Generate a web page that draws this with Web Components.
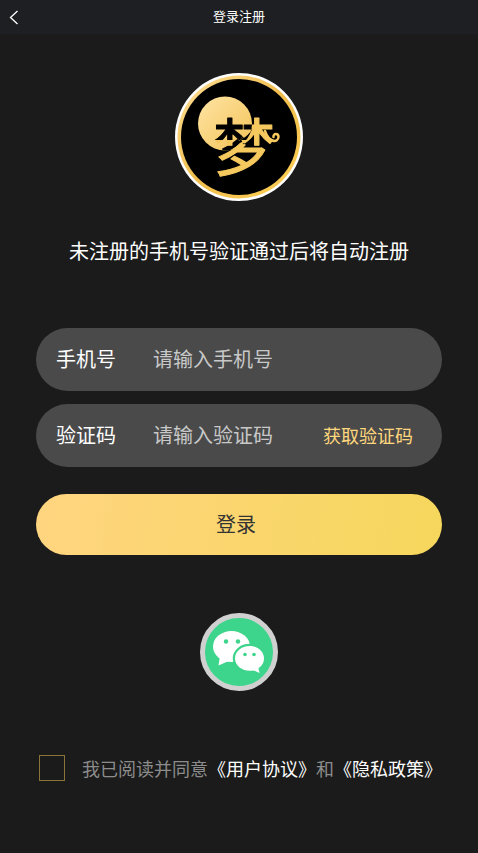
<!DOCTYPE html>
<html lang="zh-CN">
<head>
<meta charset="utf-8">
<meta name="viewport" content="width=device-width, initial-scale=1">
<title>登录注册</title>
<style>
    body {
        margin: 0;
        background: #1b1b1b;
        color: #fff;
        font-family: "Noto Sans CJK SC", sans-serif;
        font-size: 20px;
    }
</style>
</head>
<body>
<login-page></login-page>

<script>
class NavBar extends HTMLElement {
    constructor() {
        super();
        this.attachShadow({ mode: 'open' }).innerHTML = `
            <style>
                :host {
                    display: grid;
                    grid-template-columns: 28px 1fr 28px;
                    align-items: center;
                    height: 34px;
                    background: #1e1f22;
                }

                button {
                    display: flex;
                    justify-content: center;
                    padding: 0;
                    border: 0;
                    background: none;
                    color: #fff;
                    cursor: pointer;
                }

                h1 {
                    margin: 0;
                    padding-bottom: 2px;
                    font-size: 13px;
                    line-height: 20px;
                    font-weight: 400;
                    text-align: center;
                }
            </style>

            <button type="button" aria-label="返回">
                <svg width="10" height="16" viewBox="0 0 10 16" fill="none" stroke="currentColor" stroke-width="1.3">
                    <path d="M8.5 2 L1.5 8.5 L8.5 15"/>
                </svg>
            </button>
            <h1><slot></slot></h1>
        `;
    }
}

class AppLogo extends HTMLElement {
    constructor() {
        super();
        this.attachShadow({ mode: 'open' }).innerHTML = `
            <style>
                :host {
                    display: block;
                    width: 128px;
                    height: 128px;
                }

                svg {
                    display: block;
                }

                text {
                    font-size: 62px;
                    font-weight: 400;
                    stroke-width: 1;
                    stroke-linejoin: round;
                }
            </style>

            <svg width="128" height="128" viewBox="0 0 128 128">
                <defs>
                    <linearGradient id="ring" x1="0" y1="0" x2="1" y2="1">
                        <stop offset="0" stop-color="#ffe09a"/>
                        <stop offset="0.5" stop-color="#f0bd4c"/>
                        <stop offset="1" stop-color="#ffd055"/>
                    </linearGradient>
                    <linearGradient id="moon" x1="0" y1="0" x2="1" y2="1">
                        <stop offset="0" stop-color="#ffe4a4"/>
                        <stop offset="1" stop-color="#f2c357"/>
                    </linearGradient>
                    <clipPath id="shade">
                        <path d="M23 23 H77 V67 H23 Z"/>
                    </clipPath>
                    <clipPath id="disc">
                        <circle cx="50" cy="50.5" r="27"/>
                    </clipPath>
                </defs>
                <circle cx="64" cy="64" r="64" fill="#fff"/>
                <circle cx="64" cy="64" r="61.5" fill="url(#ring)"/>
                <circle cx="64" cy="64" r="58" fill="#000"/>
                <circle cx="50" cy="50.5" r="27" fill="url(#moon)"/>
                <g clip-path="url(#disc)">
                    <path d="M48 78 Q61 72 68 64" fill="none" stroke="#000" stroke-width="5"/>
                </g>
                <text x="38" y="98" fill="#f6c95f" stroke="#f6c95f">梦</text>
                <g clip-path="url(#disc)">
                    <g clip-path="url(#shade)">
                        <text x="38" y="98" fill="#000" stroke="#000" aria-hidden="true">梦</text>
                    </g>
                </g>
                <path d="M90 58 C94 70 103 70 103.500 64 C103.500 60 98 60 98.500 64" fill="none" stroke="#f6c95f" stroke-width="2.500" stroke-linecap="round"/>
            </svg>
        `;
    }
}

class FormField extends HTMLElement {
    constructor() {
        super();
        const label = this.getAttribute('label');
        const placeholder = this.getAttribute('placeholder');
        const type = this.getAttribute('type') || 'text';

        this.attachShadow({ mode: 'open' }).innerHTML = `
            <style>
                :host {
                    display: flex;
                    align-items: center;
                    height: 63px;
                    padding: 0 29px 2px 20px;
                    box-sizing: border-box;
                    border-radius: 32px;
                    background: #4a4a4a;
                }

                label {
                    flex: none;
                    width: 97px;
                    line-height: 30px;
                }

                input {
                    flex: 1;
                    min-width: 0;
                    height: 30px;
                    padding: 0;
                    border: 0;
                    outline: none;
                    background: none;
                    color: #fff;
                    font: inherit;
                }

                input::placeholder {
                    color: #c8c8c8;
                }
            </style>

            <label for="field">${label}</label>
            <input id="field" type="${type}" placeholder="${placeholder}">
            <slot></slot>
        `;
    }
}

class CodeButton extends HTMLElement {
    constructor() {
        super();
        this.attachShadow({ mode: 'open' }).innerHTML = `
            <style>
                :host {
                    display: block;
                    flex: none;
                }

                button {
                    display: block;
                    padding: 0;
                    border: 0;
                    background: none;
                    color: #ffd77c;
                    font: inherit;
                    font-size: 18px;
                    line-height: 30px;
                    cursor: pointer;
                }
            </style>

            <button type="button"><slot></slot></button>
        `;
    }
}

class SubmitButton extends HTMLElement {
    constructor() {
        super();
        this.attachShadow({ mode: 'open' }).innerHTML = `
            <style>
                :host {
                    display: block;
                }

                button {
                    display: block;
                    width: 100%;
                    height: 61px;
                    padding: 0 6px 2px 0;
                    border: 0;
                    border-radius: 32px;
                    background: linear-gradient(100deg, #ffd580, #f6d75c);
                    color: #333;
                    font: inherit;
                    cursor: pointer;
                }
            </style>

            <button type="button"><slot></slot></button>
        `;
    }
}

class WechatButton extends HTMLElement {
    constructor() {
        super();
        this.attachShadow({ mode: 'open' }).innerHTML = `
            <style>
                :host {
                    display: block;
                }

                button {
                    display: block;
                    width: 78px;
                    height: 78px;
                    padding: 0;
                    border: 5px solid #d0d0d0;
                    border-radius: 50%;
                    background: #3dd48c;
                    cursor: pointer;
                }

                svg {
                    display: block;
                }
            </style>

            <button type="button" aria-label="微信登录">
                <svg width="68" height="68" viewBox="5 5 68 68">
                    <g fill="#fff">
                        <ellipse cx="31.500" cy="33.500" rx="18.500" ry="15.500"/>
                        <path d="M20 43 L18.500 52.500 L31 47 Z"/>
                    </g>
                    <g fill="#fff" stroke="#3dd48c" stroke-width="4.500" stroke-linejoin="round" paint-order="stroke">
                        <path d="M49.500 33 C57.500 33 64 38.500 64 45.500 C64 49.500 62 53 58.500 55.300 L59.500 60 L53.500 57.400 C45 59.500 35 54 35 45.500 C35 38.500 41.500 33 49.500 33 Z"/>
                    </g>
                    <g fill="#3dd48c">
                        <circle cx="26" cy="28.500" r="2.200"/>
                        <circle cx="38" cy="28.500" r="2.200"/>
                        <circle cx="45" cy="41.500" r="1.800"/>
                        <circle cx="54" cy="41.500" r="1.800"/>
                    </g>
                </svg>
            </button>
        `;
    }
}

class UserAgreement extends HTMLElement {
    constructor() {
        super();
        this.attachShadow({ mode: 'open' }).innerHTML = `
            <style>
                :host {
                    display: flex;
                    align-items: center;
                    gap: 17px;
                    color: #8c8c8c;
                    font-size: 18px;
                    line-height: 24px;
                    white-space: nowrap;
                }

                input {
                    appearance: none;
                    flex: none;
                    width: 26px;
                    height: 26px;
                    margin: 0;
                    border: 1px solid #8a7338;
                    cursor: pointer;
                }

                input:checked {
                    background: #ffd77c;
                }

                a {
                    color: #fff;
                    text-decoration: none;
                }
            </style>

            <input id="agree" type="checkbox">
            <div><label for="agree">我已阅读并同意</label><a href="#terms">《用户协议》</a>和<a href="#privacy">《隐私政策》</a></div>
        `;
    }
}

class LoginPage extends HTMLElement {
    constructor() {
        super();
        this.attachShadow({ mode: 'open' }).innerHTML = `
            <style>
                :host {
                    display: block;
                }

                main {
                    display: flex;
                    flex-direction: column;
                    align-items: center;
                    padding: 39px 36px;
                }

                p {
                    margin: 35px 0 62px;
                    line-height: 30px;
                }

                form {
                    display: flex;
                    flex-direction: column;
                    gap: 13px;
                    width: 100%;
                }

                submit-button {
                    margin-top: 14px;
                }

                wechat-button {
                    margin: 58px 0 64px;
                }

                user-agreement {
                    align-self: flex-start;
                    margin-left: 3px;
                }
            </style>

            <nav-bar>登录注册</nav-bar>
            <main>
                <app-logo></app-logo>
                <p>未注册的手机号验证通过后将自动注册</p>
                <form>
                    <form-field label="手机号" placeholder="请输入手机号" type="tel"></form-field>
                    <form-field label="验证码" placeholder="请输入验证码">
                        <code-button>获取验证码</code-button>
                    </form-field>
                    <submit-button>登录</submit-button>
                </form>
                <wechat-button></wechat-button>
                <user-agreement></user-agreement>
            </main>
        `;
    }
}

customElements.define('nav-bar', NavBar);
customElements.define('app-logo', AppLogo);
customElements.define('form-field', FormField);
customElements.define('code-button', CodeButton);
customElements.define('submit-button', SubmitButton);
customElements.define('wechat-button', WechatButton);
customElements.define('user-agreement', UserAgreement);
customElements.define('login-page', LoginPage);
</script>
</body>
</html>
